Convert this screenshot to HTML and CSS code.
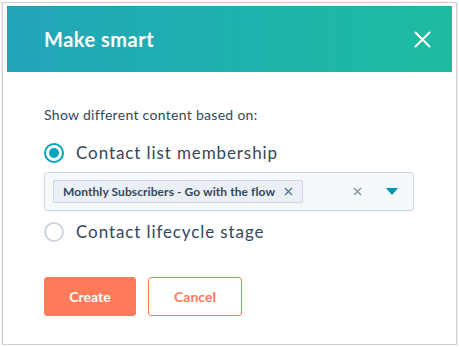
FILE: index.html
```html
<!DOCTYPE html>
<html>
<head>
<meta charset="utf-8">
<link rel="stylesheet" href="styles.css">
</head>
<body>
<div class="frame">
  <div class="dialog">
    <header class="header">
      <h1 class="title">Make smart</h1>
      <button class="close" aria-label="Close">
        <svg width="17" height="17" viewBox="0 0 17 17"><path d="M1.5 1.5L15.5 15.5M15.5 1.5L1.5 15.5" stroke="#fff" stroke-width="2" stroke-linecap="round"/></svg>
      </button>
    </header>
    <div class="body">
      <p class="label">Show different content based on:</p>
      <label class="radio">
        <span class="dot checked"></span>
        <span class="radio-text">Contact list membership</span>
      </label>
      <div class="select">
        <span class="tag">Monthly Subscribers - Go with the flow
          <svg class="tag-x" width="9" height="9" viewBox="0 0 9 9"><path d="M1 1L8 8M8 1L1 8" stroke="#516f90" stroke-width="1.2"/></svg>
        </span>
        <span class="clear"><svg width="9" height="9" viewBox="0 0 9 9"><path d="M1 1L8 8M8 1L1 8" stroke="#7c98b6" stroke-width="1.5"/></svg></span>
        <span class="caret"><svg width="12" height="7" viewBox="0 0 12 7"><path d="M0 0H12L6 7Z" fill="#0091ae"/></svg></span>
      </div>
      <label class="radio second">
        <span class="dot"></span>
        <span class="radio-text">Contact lifecycle stage</span>
      </label>
      <div class="actions">
        <button class="btn primary">Create</button>
        <button class="btn secondary">Cancel</button>
      </div>
    </div>
  </div>
</div>
</body>
</html>
```
FILE: styles.css
```css
* { box-sizing: border-box; }
html, body { margin: 0; padding: 0; background: #fff; }
body { font-family: Lato, "Open Sans", sans-serif; color: #33475b; }
.frame {
  margin: 2px 2px 0 2px;
  width: 455px;
  height: 343px;
  border: 1px solid #cfcfcf;
  box-shadow: 0 1px 1px rgba(0,0,0,0.35);
  padding: 3px 4px;
}
.dialog { background: #fff; }
.header {
  height: 66px;
  background: linear-gradient(90deg, #22a5ba 0%, #1eb3ad 55%, #1dbca0 100%);
  display: flex;
  align-items: center;
  justify-content: space-between;
  padding: 0 21px 0 37px;
}
.title {
  margin: 0;
  font-size: 20px;
  font-weight: 700;
  color: #fff;
  letter-spacing: 0.5px;
}
.close {
  background: none;
  border: 0;
  padding: 0;
  display: flex;
  cursor: pointer;
}
.body { padding: 33px 38px 0 37px; }
.label {
  margin: 0 0 18px 0;
  font-size: 14px;
  line-height: 20px;
  letter-spacing: 0.3px;
  color: #33475b;
}
.radio {
  display: flex;
  align-items: center;
  gap: 12px;
  height: 20px;
}
.dot {
  width: 20px;
  height: 20px;
  border-radius: 50%;
  border: 2px solid #cbd6e2;
  background: #fff;
  display: flex;
  align-items: center;
  justify-content: center;
}
.dot.checked { border-color: #00a4bd; }
.dot.checked::after {
  content: "";
  width: 10px;
  height: 10px;
  border-radius: 50%;
  background: #00a4bd;
}
.radio-text { font-size: 17px; letter-spacing: 0.9px; color: #33475b; line-height: 20px; }
.select {
  margin-top: 9px;
  height: 39px;
  border: 1px solid #cbd6e2;
  border-radius: 3px;
  background: #f5f8fa;
  display: flex;
  align-items: center;
  padding: 0 15px 0 8px;
}
.tag {
  height: 23px;
  border: 1px solid #cbd6e2;
  background: #eaf0f6;
  border-radius: 2px;
  display: flex;
  align-items: center;
  gap: 9px;
  padding: 0 9px 0 9px;
  font-size: 12px;
  font-weight: 700;
  letter-spacing: 0.08px;
  color: #33475b;
}
.clear { margin-left: auto; display: flex; margin-right: 24px; }
.caret { display: flex; }
.radio.second { margin-top: 11px; }
.actions {
  margin-top: 35px;
  display: flex;
  gap: 12px;
}
.btn {
  height: 39px;
  width: 92px;
  border-radius: 3px;
  font-family: Lato, sans-serif;
  font-size: 14px;
  font-weight: 700;
  cursor: pointer;
}
.primary { background: #ff7a59; border: 1px solid #ff7a59; color: #fff; }
.secondary { width: 94px; background: #fff; border: 1px solid #ff7a59; color: #ff7a59; }
```
